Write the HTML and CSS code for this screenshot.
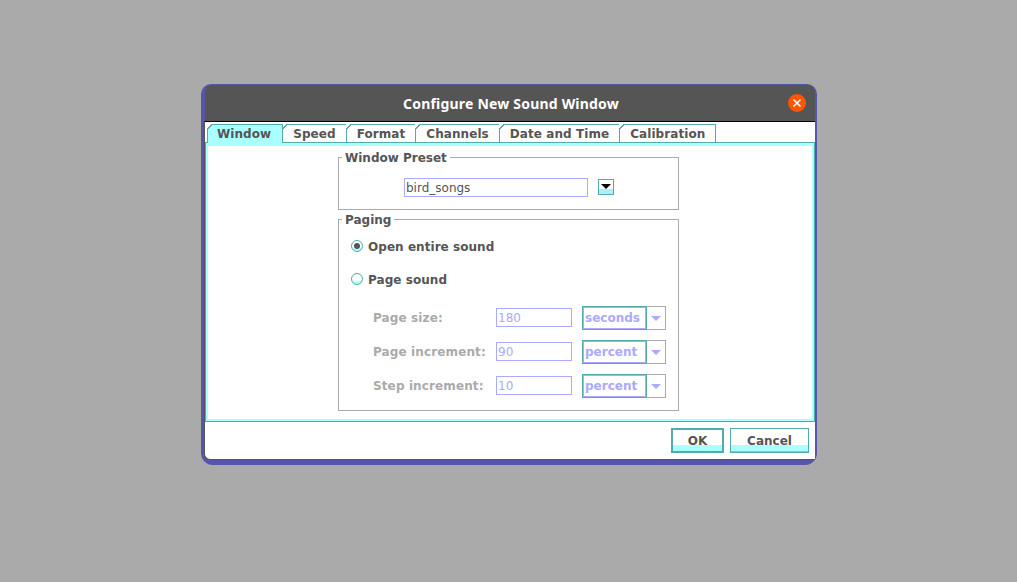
FILE: index.html
```html
<!DOCTYPE html>
<html lang="en">
<head>
  <meta charset="UTF-8" />
  <title>Configure New Sound Window</title>
  <link rel="stylesheet" href="styles.css">
</head>
<body>
  <div class="window">
    <div class="titlebar">
      <span class="title-spacer"></span>
      <span class="title">Configure New Sound Window</span>
      <span class="close-btn">
        <svg width="18" height="18" viewBox="0 0 18 18">
          <circle cx="9" cy="9" r="9" fill="#ff5500" />
          <path d="M5.5 5.5 L12.5 12.5 M12.5 5.5 L5.5 12.5" stroke="#fff" stroke-width="1.6" />
        </svg>
      </span>
    </div>

    <div class="dialog">
      <div class="tabs">
        <div class="tab active">Window</div>
        <div class="tab">Speed</div>
        <div class="tab">Format</div>
        <div class="tab">Channels</div>
        <div class="tab">Date and Time</div>
        <div class="tab">Calibration</div>
      </div>

      <div class="panel">
        <div class="panel-inner">
          <div class="group preset-group">
            <span class="group-title">Window Preset</span>
            <div class="field preset-field">bird_songs</div>
            <div class="preset-arrow"><span class="arrow-black"></span></div>
          </div>

          <div class="group paging-group">
            <span class="group-title">Paging</span>
            <div class="radio-row">
              <span class="radio checked"></span>
              <span>Open entire sound</span>
            </div>
            <div class="radio-row second">
              <span class="radio"></span>
              <span>Page sound</span>
            </div>

            <div class="form-rows">
              <div class="form-row">
                <span class="form-label">Page size:</span>
                <div class="field disabled">180</div>
                <div class="combo">
                  <div class="combo-value">seconds</div>
                  <div class="combo-arrow"><span class="arrow-light"></span></div>
                </div>
              </div>
              <div class="form-row">
                <span class="form-label">Page increment:</span>
                <div class="field disabled">90</div>
                <div class="combo">
                  <div class="combo-value">percent</div>
                  <div class="combo-arrow"><span class="arrow-light"></span></div>
                </div>
              </div>
              <div class="form-row">
                <span class="form-label">Step increment:</span>
                <div class="field disabled">10</div>
                <div class="combo">
                  <div class="combo-value">percent</div>
                  <div class="combo-arrow"><span class="arrow-light"></span></div>
                </div>
              </div>
            </div>
          </div>
        </div>
      </div>

      <div class="buttons">
        <div class="btn default">OK</div>
        <div class="btn">Cancel</div>
      </div>
    </div>
  </div>
</body>
</html>
```

FILE: styles.css
```css
html, body {
  margin: 0;
  padding: 0;
  height: 582px;
  overflow: hidden;
  background: #aaaaaa;
  font-family: "DejaVu Sans", sans-serif;
  font-size: 12px;
  color: #555555;
}

body {
  box-sizing: border-box;
  padding: 84px 0 0 201px;
}

.window {
  box-sizing: border-box;
  width: 616px;
  height: 381px;
  padding: 1px 2px 5px 3px;
  background: #5555aa;
  border-radius: 10px 10px 12px 12px;
}

.titlebar {
  display: flex;
  align-items: center;
  height: 36px;
  margin-left: 1px;
  background: #555555;
  border-radius: 8px 8px 0 0;
}

.title-spacer {
  width: 29px;
}

.title {
  flex: 1;
  text-align: center;
  font-family: "Noto Sans", sans-serif;
  font-weight: bold;
  font-size: 14px;
  letter-spacing: 0.2px;
  color: white;
}

.close-btn {
  display: flex;
  width: 18px;
  height: 18px;
  margin-right: 9px;
}

.dialog {
  height: 339px;
  box-sizing: border-box;
  background: white;
  border-top: 1px solid black;
  border-left: 1px solid #555555;
  border-bottom: 1px solid #555555;
  border-radius: 0 0 0 6px;
}

/* tabs */
.tabs {
  display: flex;
  align-items: flex-start;
  height: 18px;
  padding: 2px 0 0 2px;
}

.tab {
  position: relative;
  box-sizing: border-box;
  height: 18px;
  margin-right: -1px;
  padding: 0 10px;
  border: 1px solid #55aaaa;
  border-bottom: none;
  font-weight: bold;
  letter-spacing: 0.07px;
  line-height: 18px;
  background: white;
}

.tab::before {
  content: "";
  position: absolute;
  top: -1px;
  left: -1px;
  width: 6px;
  height: 6px;
  background: linear-gradient(135deg, white 0, white 3.4px, #55aaaa 3.4px, #55aaaa 4.6px, transparent 4.6px);
}

.tab.active {
  z-index: 1;
  height: 19px;
  padding: 0 11px 0 9px;
  background: #aaffff;
}

.panel {
  position: relative;
  height: 280px;
  box-sizing: border-box;
  border: 1px solid #55aaaa;
}

.panel-inner {
  height: 278px;
  box-sizing: border-box;
  padding: 11px 0 0 130px;
  border-style: solid;
  border-color: #aaffff;
  border-width: 3px 2px 2px 2px;
}

/* group boxes */
.group {
  position: relative;
  box-sizing: border-box;
  width: 341px;
  border: 1px solid #aaaaaa;
}

.group-title {
  position: absolute;
  top: -7px;
  left: 3px;
  padding: 0 3px;
  background: white;
  font-weight: bold;
  line-height: 14px;
}

.preset-group {
  display: flex;
  align-items: flex-start;
  gap: 10px;
  height: 53px;
  padding: 20px 0 12px 65px;
}

.field {
  box-sizing: border-box;
  height: 19px;
  padding-left: 1px;
  border: 1px solid #aaaaff;
  line-height: 18px;
}

.preset-field {
  width: 184px;
  color: #555555;
}

.preset-arrow {
  display: flex;
  align-items: center;
  justify-content: center;
  box-sizing: border-box;
  width: 16px;
  height: 16px;
  margin-top: 1px;
  border: 1px solid #55aaaa;
  background: linear-gradient(white 0, white 9px, #aaeeff 9px);
}

.arrow-black {
  width: 0;
  height: 0;
  margin-bottom: 2px;
  border-left: 5px solid transparent;
  border-right: 5px solid transparent;
  border-top: 5px solid black;
}

.paging-group {
  margin-top: 9px;
  padding: 16px 0 12px 12px;
}

.radio-row {
  display: flex;
  align-items: center;
  gap: 5px;
  height: 20px;
  padding-top: 1px;
  box-sizing: border-box;
  font-weight: bold;
  letter-spacing: 0.05px;
}

.radio-row.second {
  margin-top: 13px;
}

.radio {
  display: flex;
  align-items: center;
  justify-content: center;
  box-sizing: border-box;
  width: 12px;
  height: 12px;
  margin-top: -1px;
  border: 1px solid #55aaaa;
  border-radius: 50%;
  background: linear-gradient(white 0, white 6px, #aaffff 8px);
}

.radio.checked::after {
  content: "";
  width: 6px;
  height: 6px;
  border-radius: 50%;
  background: #555555;
}

.form-rows {
  display: flex;
  flex-direction: column;
  gap: 10px;
  margin-top: 17px;
  padding-left: 22px;
}

.form-row {
  display: flex;
  align-items: flex-start;
  height: 24px;
}

.form-label {
  width: 123px;
  padding-top: 5px;
  font-weight: bold;
  letter-spacing: 0.12px;
  color: #aaaaaa;
}

.field.disabled {
  width: 76px;
  margin-top: 2px;
  margin-right: 10px;
  color: #aaaaff;
}

.combo {
  display: flex;
  height: 24px;
}

.combo-value {
  box-sizing: border-box;
  width: 65px;
  padding-left: 2px;
  border: 1px solid #55aaaa;
  box-shadow: inset 0 0 0 1px #aaaaff;
  font-weight: bold;
  line-height: 23px;
  color: #aaaaff;
}

.combo-arrow {
  display: flex;
  align-items: center;
  justify-content: center;
  box-sizing: border-box;
  width: 19px;
  border: 1px solid #aaaaaa;
  border-left: none;
}

.arrow-light {
  width: 0;
  height: 0;
  border-left: 5px solid transparent;
  border-right: 5px solid transparent;
  border-top: 5px solid #aaaaff;
}

/* bottom buttons */
.buttons {
  display: flex;
  justify-content: flex-end;
  gap: 6px;
  padding: 6px 6px 0 0;
}

.btn {
  box-sizing: border-box;
  width: 79px;
  height: 25px;
  border: 1px solid #55aaaa;
  text-align: center;
  font-weight: bold;
  line-height: 24px;
  background: linear-gradient(white 0, white 16px, #aaffff 16px, #aaffff 22px, #aaaaff 22px);
}

.btn.default {
  width: 53px;
  border-width: 2px;
  line-height: 22px;
  background: linear-gradient(white 0, white 15px, #aaffff 15px);
}
```
